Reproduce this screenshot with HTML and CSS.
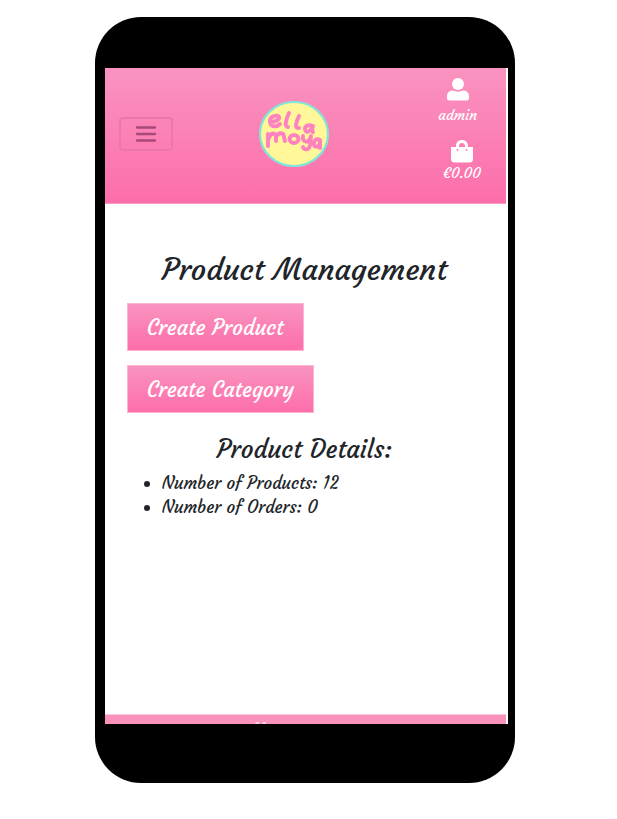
FILE: index.html
```html
<!DOCTYPE html>
<html lang="en">
<head>
<meta charset="utf-8">
<meta name="viewport" content="width=device-width, initial-scale=1">
<title>Product Management</title>
<link rel="stylesheet" href="styles.css">
</head>
<body>
<div class="phone">
  <div class="screen">
    <header class="header">
      <button class="menu" type="button" aria-label="Menu">
        <svg width="24" height="18" viewBox="0 0 24 18" fill="none" stroke="currentColor" stroke-width="2.3" stroke-linecap="round"><path d="M3 2.500H21M3 9H21M3 15.500H21"/></svg>
      </button>
      <a class="logo" href="#" aria-label="Home">
        <svg width="70" height="66" viewBox="0 0 70 66" fill="none">
          <ellipse cx="35" cy="33" rx="34" ry="32" fill="#fff799" stroke="#83e3d8" stroke-width="2.2"/>
          <g stroke="#ff82c0" stroke-width="3.9" stroke-linecap="round" stroke-linejoin="round">
            <path d="M11 21C15 21 21 19 20 16C19 13 10 15 11 21C12 27 18 26 21 23"/>
            <path d="M30 12C27 18 25 26 29 26"/>
            <path d="M40 15C37 21 35 28 40 27"/>
            <path d="M54 25C49 23 46 25 46 28C46 33 52 31 54 25C53 28 53 30 54 31"/>
            <path d="M9 45L9 33M10 37C12 31 17 31 17 37V40M17 36C20 30 25 32 25 36L26 40"/>
            <ellipse cx="35" cy="38" rx="4.5" ry="4"/>
            <path d="M44 35C43 42 50 43 52 35M52 35L51 44C50 50 45 49 44 46"/>
            <path d="M61 39C57 37 54 40 55 44C57 49 62 43 61 39L61 47"/>
          </g>
        </svg>
      </a>
      <nav class="account" aria-label="Account">
        <a class="account-link" href="#">
          <svg width="22" height="23" viewBox="0 0 22 23" fill="currentColor"><circle cx="11" cy="6" r="6"/><path d="M6 12.5C8 14 14 14 16 12.5C20 12.5 22 15 22 18V20Q22 22.500 19.500 22.500H2.500Q0 22.500 0 20V18C0 15 2 12.500 6 12.500Z"/></svg>
          <span>admin</span>
        </a>
        <a class="account-link basket" href="#">
          <svg width="22" height="23" viewBox="0 0 22 23" fill="currentColor"><path fill-rule="evenodd" d="M0 7H5V6C5-2 17-2 17 6V7H22V19Q22 22.500 18.500 22.500H3.500Q0 22.500 0 19ZM8 7H14V6C14 2 8 2 8 6Z"/><g fill="#fb82b5"><circle cx="6.500" cy="10" r="1"/><circle cx="15.500" cy="10" r="1"/></g></svg>
          <span>€0.00</span>
        </a>
      </nav>
    </header>
    <main class="content">
      <h1>Product Management</h1>
      <div class="actions">
        <button class="action" type="button">Create Product</button>
        <button class="action" type="button">Create Category</button>
      </div>
      <h2>Product Details:</h2>
      <ul>
        <li>Number of Products: 12</li>
        <li>Number of Orders: 0</li>
      </ul>
    </main>
    <footer class="footer">
      <svg width="12" height="2" viewBox="0 0 12 2" fill="#fbd3e3" aria-hidden="true"><path d="M1 0H4V2H0ZM8 0H11V2H7Z"/></svg>
    </footer>
  </div>
</div>
</body>
</html>
```
FILE: styles.css
```css
* { box-sizing: border-box; }
body {
  margin: 0;
  padding: 17px 102px 36px 95px;
  background: #fff;
  color: #212529;
  font-family: Courgette, "Noto Sans", cursive;
}
.phone {
  padding: 51px 7px 59px 10px;
  border-radius: 46px;
  background: #000;
}
.screen {
  padding-right: 2px;
  background: #fff;
}
.header {
  display: grid;
  grid-template-columns: 12fr auto 13fr;
  align-items: center;
  min-height: 136px;
  padding: 8px 25px 12px 14px;
  background: linear-gradient(#f993bf, #fd6eaa);
  border-bottom: 1px solid #fb9bc4;
}
.menu {
  display: flex;
  align-items: center;
  justify-content: center;
  justify-self: start;
  width: 54px;
  height: 34px;
  padding: 0;
  border: 2px solid #ec78a9;
  border-radius: 4px;
  background: transparent;
  color: #a9487a;
}
.logo { display: block; height: 66px; }
.account {
  display: flex;
  flex-direction: column;
  align-items: flex-end;
  align-self: start;
  gap: 15px;
  padding-top: 2px;
}
.account-link {
  display: flex;
  flex-direction: column;
  align-items: center;
  margin-right: 4px;
  color: #fff;
  font-size: 14px;
  line-height: 20px;
  text-decoration: none;
}
.account-link span { margin-top: 4px; }
.basket { margin-right: 0; }
.basket span { margin-top: 0; }
.content {
  min-height: 510px;
  padding: 48px 24px 0 22px;
}
h1, h2 {
  margin: 0;
  font-weight: 400;
  text-align: center;
}
h1 { font-size: 30px; line-height: 36px; }
h2 { font-size: 25px; line-height: 30px; }
.actions {
  display: flex;
  flex-direction: column;
  align-items: flex-start;
  gap: 14px;
  margin: 15px 0 22px;
}
.action {
  height: 48px;
  padding: 0 19px;
  border: 1px solid #fcb5d1;
  background: linear-gradient(#f993bf, #fd6eaa);
  color: #fff;
  font: inherit;
  font-size: 21px;
}
ul {
  margin: 6px 0 0;
  padding-left: 35px;
  font-size: 17px;
  line-height: 24px;
}
.footer {
  display: flex;
  align-items: flex-end;
  height: 10px;
  padding-left: 150px;
  background: #f993bb;
  border-top: 1px solid #fcc5dc;
}
.footer svg { display: block; }
```
